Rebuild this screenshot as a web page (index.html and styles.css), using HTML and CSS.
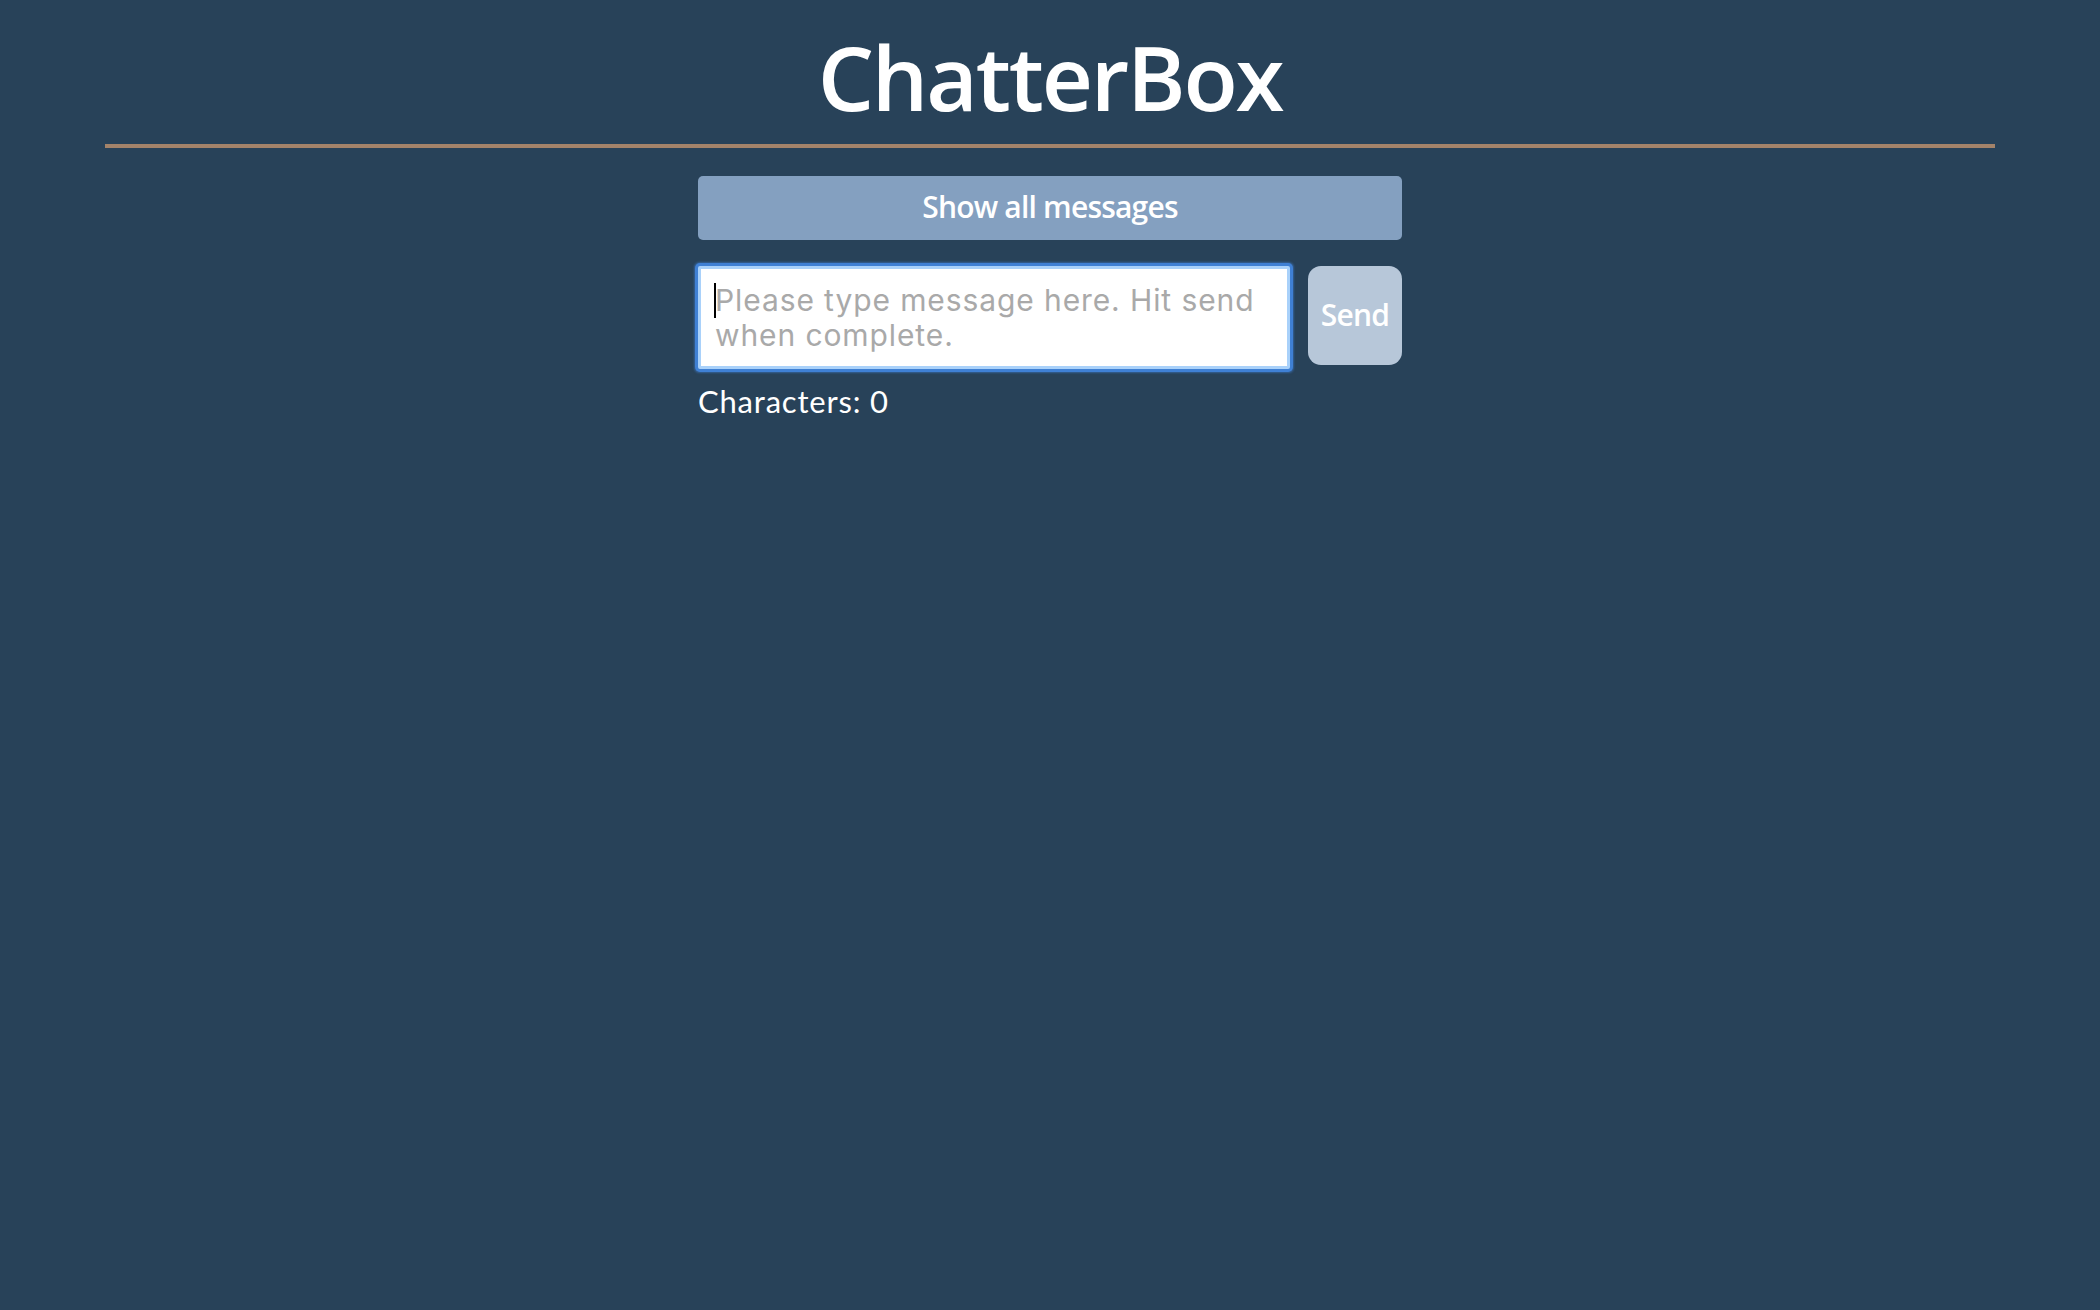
FILE: index.html
```html
<!DOCTYPE html>
<html lang="en">
<head>
<meta charset="utf-8">
<title>ChatterBox</title>
<link rel="stylesheet" href="styles.css">
</head>
<body>
<header class="header">
  <h1 class="title">ChatterBox</h1>
</header>
<main class="chat">
  <button class="show-all" type="button">Show all messages</button>
  <div class="compose">
    <div class="field">
      <textarea class="message" placeholder="Please type message here. Hit send when complete."></textarea>
      <span class="caret"></span>
    </div>
    <button class="send" type="button">Send</button>
  </div>
  <p class="count">Characters: 0</p>
</main>
</body>
</html>
```

FILE: styles.css
```css
html, body {
  margin: 0;
  padding: 0;
  background: #284259;
  min-height: 100%;
}

body {
  font-family: "Open Sans", "Noto Sans", sans-serif;
  color: #ffffff;
  height: 1310px;
}

.header {
  width: 90%;
  margin: 0 auto;
  border-bottom: 4px solid #a3836a;
  padding: 32px 0 22px;
}

.title {
  margin: 0;
  font-family: "Open Sans", "Noto Sans", sans-serif;
  font-weight: 600;
  font-size: 89px;
  line-height: 90px;
  text-align: center;
  color: #ffffff;
  letter-spacing: -2.2px;
}

.chat {
  width: 704px;
  margin: 28px auto 0;
}

.show-all {
  display: block;
  width: 100%;
  height: 64px;
  border: none;
  border-radius: 5px;
  background: #84a0c0;
  color: #ffffff;
  font-family: "Open Sans", "Noto Sans", sans-serif;
  font-weight: 600;
  font-size: 30px;
  letter-spacing: -0.8px;
  padding: 0 0 4px;
}

.compose {
  display: flex;
  align-items: flex-start;
  gap: 18px;
  margin-top: 26px;
}

.field {
  position: relative;
  flex: 1;
  display: flex;
}

.message {
  flex: 1;
  box-sizing: border-box;
  height: 103px;
  margin: 0;
  padding: 14px 14px 6px;
  border: 3px solid #a9d1fa;
  border-radius: 2px;
  box-shadow: 0 0 0 3px #3f80d4, 0 0 2px 4px rgba(63, 128, 212, 0.5);
  outline: none;
  resize: none;
  background: #ffffff;
  color: #222222;
  font-family: "Inter", "Liberation Sans", sans-serif;
  font-size: 30px;
  line-height: 35px;
  letter-spacing: 0.9px;
}

.message::placeholder {
  color: #a9a9a9;
  opacity: 1;
}

.caret {
  position: absolute;
  left: 16px;
  top: 17px;
  width: 2px;
  height: 35px;
  background: #000000;
}

.send {
  flex: none;
  width: 94px;
  height: 99px;
  border: none;
  border-radius: 13px;
  background: #b7c7d9;
  color: #ffffff;
  font-family: "Open Sans", "Noto Sans", sans-serif;
  font-weight: 600;
  font-size: 30px;
  letter-spacing: -0.8px;
  padding: 0 0 3px;
}

.count {
  margin: 14px 0 0;
  font-family: "Lato", sans-serif;
  font-size: 31px;
  line-height: 36px;
  letter-spacing: 0.8px;
  color: #ffffff;
}
```
